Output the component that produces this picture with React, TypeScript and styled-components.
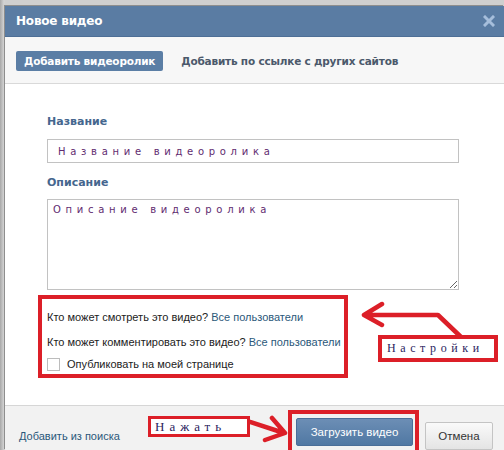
import styled, { createGlobalStyle } from "styled-components";

const GlobalStyle = createGlobalStyle`
  html, body {
    margin: 0;
    padding: 0;
  }
  body {
    font-family: "Liberation Sans", Arial, sans-serif;
    font-size: 11px;
    color: #222;
    overflow: hidden;
  }
`;

const RED = "#dc1f28";

const Page = styled.div`
  width: 504px;
  height: 450px;
  box-sizing: border-box;
  padding: 6px 0 0 5px;
  background: linear-gradient(to right, #a8a8a8 0px, #d4d4d4 4px, #cfcfcf 5px);
  display: flex;
  overflow: hidden;
`;

const Dialog = styled.div`
  flex: 1;
  display: flex;
  flex-direction: column;
  background: #fff;
  box-shadow: -1px -1px 0 #8e8e8e;
`;

const Header = styled.div`
  height: 31px;
  flex-shrink: 0;
  display: flex;
  align-items: center;
  justify-content: space-between;
  padding: 0 9px 0 11px;
  background: #5a7ca3;
  border-bottom: 1px solid #4e6f96;
  box-sizing: border-box;
`;

const Title = styled.div`
  color: #fff;
  font-weight: bold;
  font-size: 12px;
  font-family: "DejaVu Sans", sans-serif;
  letter-spacing: -0.2px;
`;

const TabBar = styled.div`
  height: 47px;
  flex-shrink: 0;
  box-sizing: border-box;
  display: flex;
  align-items: flex-start;
  gap: 18px;
  padding: 14px 0 0 11px;
  background: #f7f7f7;
  border-bottom: 1px solid #d9d9d9;
`;

const Tab = styled.div<{ $active?: boolean }>`
  height: 20px;
  box-sizing: border-box;
  display: flex;
  align-items: center;
  padding: 0 8px;
  border-radius: 2px;
  font-family: "DejaVu Sans", sans-serif;
  font-weight: bold;
  font-size: 10.5px;
  letter-spacing: -0.2px;
  background: ${(p) => (p.$active ? "#5b7ea5" : "transparent")};
  color: ${(p) => (p.$active ? "#fff" : "#4b596b")};
  margin-left: ${(p) => (p.$active ? "0" : "-8px")};
`;

const Body = styled.div`
  flex: 1;
  display: flex;
  flex-direction: column;
  padding: 30px 0 0 42px;
`;

const Label = styled.div<{ $gap: number }>`
  font-family: "DejaVu Sans", sans-serif;
  font-weight: bold;
  font-size: 11px;
  line-height: 15px;
  color: #45668e;
  margin-bottom: ${(p) => p.$gap}px;
`;

const fieldText = `
  font-family: "DejaVu Sans", sans-serif;
  font-size: 10px;
  letter-spacing: 4.7px;
  color: #5f2c70;
`;

const TextInput = styled.input`
  width: 412px;
  height: 24px;
  box-sizing: border-box;
  border: 1px solid #c2c2c2;
  padding: 0 0 0 10px;
  margin: 0 0 12px;
  outline: none;
  ${fieldText}
`;

const TextArea = styled.textarea`
  width: 412px;
  height: 91px;
  box-sizing: border-box;
  border: 1px solid #c2c2c2;
  padding: 4px 5px;
  margin: 0;
  outline: none;
  resize: both;
  ${fieldText}
`;

const SettingsRow = styled.div`
  display: flex;
  align-items: flex-start;
  margin: 5px 0 0 -9px;
`;

const Highlight = styled.div`
  border: 4px solid ${RED};
  box-sizing: border-box;
`;

const SettingsBox = styled(Highlight)`
  width: 310px;
  height: 83px;
  padding: 5px 0 0 5px;
  display: flex;
  flex-direction: column;
`;

const SettingLine = styled.div<{ $h: number }>`
  height: ${(p) => p.$h}px;
  display: flex;
  align-items: center;
  white-space: nowrap;
  color: #222;
`;

const Link = styled.span`
  color: #2b587a;
  cursor: pointer;
`;

const CheckBox = styled.span`
  width: 13px;
  height: 13px;
  box-sizing: border-box;
  border: 1px solid #bcbcbc;
  background: #fff;
  margin-right: 7px;
`;

const Callout = styled.div`
  display: flex;
  flex-direction: column;
  margin-left: 12px;
`;

const NoteBox = styled(Highlight)<{ $w: number; $h: number }>`
  width: ${(p) => p.$w}px;
  height: ${(p) => p.$h}px;
  flex-shrink: 0;
  background: #fff;
  display: flex;
  align-items: center;
  white-space: nowrap;
  overflow: hidden;
  padding-left: 5px;
  font-family: "Liberation Serif", serif;
  font-size: 12px;
  letter-spacing: 4.6px;
  color: #2b1d5e;
`;

const SettingsNote = styled(NoteBox)`
  margin: -4px 0 0 18px;
  padding-left: 5px;
`;

const Footer = styled.div`
  height: 45px;
  flex-shrink: 0;
  box-sizing: border-box;
  display: flex;
  align-items: flex-start;
  padding: 4px 11px 0 14px;
  background: #f2f2f2;
  border-top: 1px solid #d6d6d6;
`;

const FooterLink = styled(Link)`
  margin-top: 19px;
  line-height: 15px;
`;

const Actions = styled.div`
  margin-left: auto;
  display: flex;
  align-items: flex-start;
`;

const PressNote = styled(NoteBox)`
  margin-top: 6px;
  border-width: 3px;
  padding-left: 4px;
  font-size: 13px;
  letter-spacing: 5px;
`;

const ButtonFrame = styled(Highlight)`
  width: 131px;
  height: 48px;
  padding: 4px 2px 0 4px;
`;

const Button = styled.button<{ $primary?: boolean }>`
  height: 28px;
  box-sizing: border-box;
  border-radius: 2px;
  font-family: "Liberation Sans", Arial, sans-serif;
  font-size: 11.5px;
  padding: 0;
  cursor: pointer;
  border: 1px solid ${(p) => (p.$primary ? "#4a6e98" : "#c4c4c4")};
  color: ${(p) => (p.$primary ? "#fff" : "#333")};
  background: ${(p) =>
    p.$primary
      ? "linear-gradient(#6c8eb5, #5078a3)"
      : "linear-gradient(#fafafa, #e4e4e4)"};
`;

const UploadButton = styled(Button)`
  width: 117px;
`;

const CancelButton = styled(Button)`
  width: 68px;
  margin: 12px 0 0 6px;
`;

const CloseIcon = () => (
  <svg width="12" height="12" viewBox="0 0 12 12">
    <path
      d="M2 2 L10 10 M10 2 L2 10"
      stroke="#a6bedb"
      strokeWidth="3"
      strokeLinecap="square"
    />
  </svg>
);

const SettingsArrow = () => (
  <svg width="104" height="44" viewBox="0 0 104 44">
    <path
      d="M22 9 L4 20 L22 30 M4 20 L78 20 L101 42"
      fill="none"
      stroke={RED}
      strokeWidth="4.5"
      strokeLinecap="round"
      strokeLinejoin="round"
    />
  </svg>
);

const PressArrow = () => (
  <svg width="38" height="34" viewBox="0 0 38 34" style={{ marginTop: 2 }}>
    <path
      d="M0 10 L34 21 M22 6 L35 21 L15 28"
      fill="none"
      stroke={RED}
      strokeWidth="4.5"
      strokeLinecap="round"
      strokeLinejoin="round"
    />
  </svg>
);

export default function App() {
  return (
    <>
      <GlobalStyle />
      <Page>
        <Dialog>
          <Header>
            <Title>Новое видео</Title>
            <CloseIcon />
          </Header>
          <TabBar>
            <Tab $active>Добавить видеоролик</Tab>
            <Tab>Добавить по ссылке с других сайтов</Tab>
          </TabBar>
          <Body>
            <Label $gap={10}>Название</Label>
            <TextInput defaultValue="Название видеоролика" readOnly />
            <Label $gap={9}>Описание</Label>
            <TextArea defaultValue="Описание видеоролика" readOnly />
            <SettingsRow>
              <SettingsBox>
                <SettingLine $h={25}>
                  Кто может смотреть это видео?&nbsp;<Link>Все пользователи</Link>
                </SettingLine>
                <SettingLine $h={25}>
                  Кто может комментировать это видео?&nbsp;
                  <Link>Все пользователи</Link>
                </SettingLine>
                <SettingLine $h={20}>
                  <CheckBox />
                  Опубликовать на моей странице
                </SettingLine>
              </SettingsBox>
              <Callout>
                <SettingsArrow />
                <SettingsNote $w={120} $h={27}>
                  Настройки
                </SettingsNote>
              </Callout>
            </SettingsRow>
          </Body>
          <Footer>
            <FooterLink>Добавить из поиска</FooterLink>
            <Actions>
              <PressNote $w={102} $h={21}>
                Нажать
              </PressNote>
              <PressArrow />
              <ButtonFrame>
                <UploadButton $primary>Загрузить видео</UploadButton>
              </ButtonFrame>
              <CancelButton>Отмена</CancelButton>
            </Actions>
          </Footer>
        </Dialog>
      </Page>
    </>
  );
}
